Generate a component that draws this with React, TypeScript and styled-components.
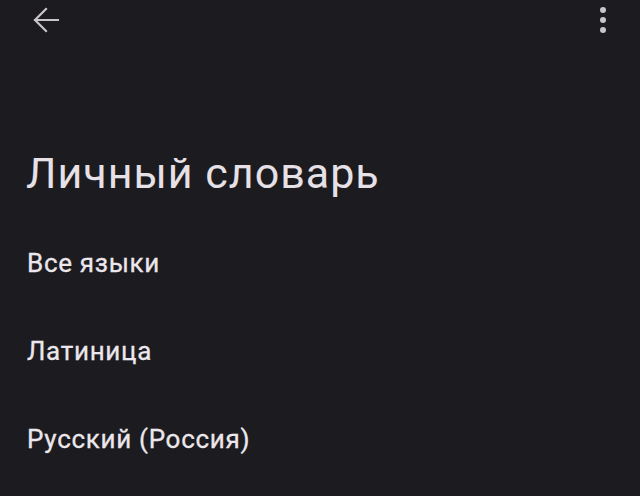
import React from "react";
import styled, { createGlobalStyle } from "styled-components";

const GlobalStyle = createGlobalStyle`
  html, body {
    margin: 0;
    padding: 0;
    background: #1c1b20;
  }
  body {
    font-family: Roboto, "Noto Sans", sans-serif;
    color: #e6e1e6;
  }
`;

const Screen = styled.div`
  width: 640px;
  height: 496px;
  overflow: hidden;
  background: #1c1b20;
`;

const TopBar = styled.div`
  height: 40px;
  display: flex;
  align-items: center;
  justify-content: space-between;
  padding: 0 33px 0 33px;
`;

const IconButton = styled.button`
  display: flex;
  align-items: center;
  justify-content: center;
  padding: 0;
  border: none;
  background: none;
  color: #c9c5ca;
`;

const Title = styled.h1`
  margin: 108px 0 0;
  padding-left: 26px;
  font-size: 43px;
  line-height: 50px;
  font-weight: 400;
  letter-spacing: 1px;
  color: #e6e1e6;
`;

const List = styled.div`
  margin-top: 21px;
  display: flex;
  flex-direction: column;
`;

const Item = styled.div`
  height: 88px;
  line-height: 88px;
  padding-left: 27px;
  font-size: 26px;
  font-weight: 400;
  letter-spacing: 0.7px;
  color: #ece7ec;
  -webkit-text-stroke: 0.3px #ece7ec;
`;

const items = ["Все языки", "Латиница", "Русский (Россия)"];

const App: React.FC = () => {
  return (
    <Screen>
      <GlobalStyle />
      <TopBar>
        <IconButton>
          <svg width="26" height="26" viewBox="0 0 26 26" fill="none">
            <path
              d="M25 13H2M13 2L2 13l11 11"
              stroke="currentColor"
              strokeWidth="2.2"
              strokeLinecap="square"
            />
          </svg>
        </IconButton>
        <IconButton>
          <svg width="8" height="28" viewBox="0 0 8 28" fill="currentColor">
            <circle cx="4" cy="4" r="3" />
            <circle cx="4" cy="14" r="3" />
            <circle cx="4" cy="24" r="3" />
          </svg>
        </IconButton>
      </TopBar>
      <Title>Личный словарь</Title>
      <List>
        {items.map((label) => (
          <Item key={label}>{label}</Item>
        ))}
      </List>
    </Screen>
  );
};

export default App;
